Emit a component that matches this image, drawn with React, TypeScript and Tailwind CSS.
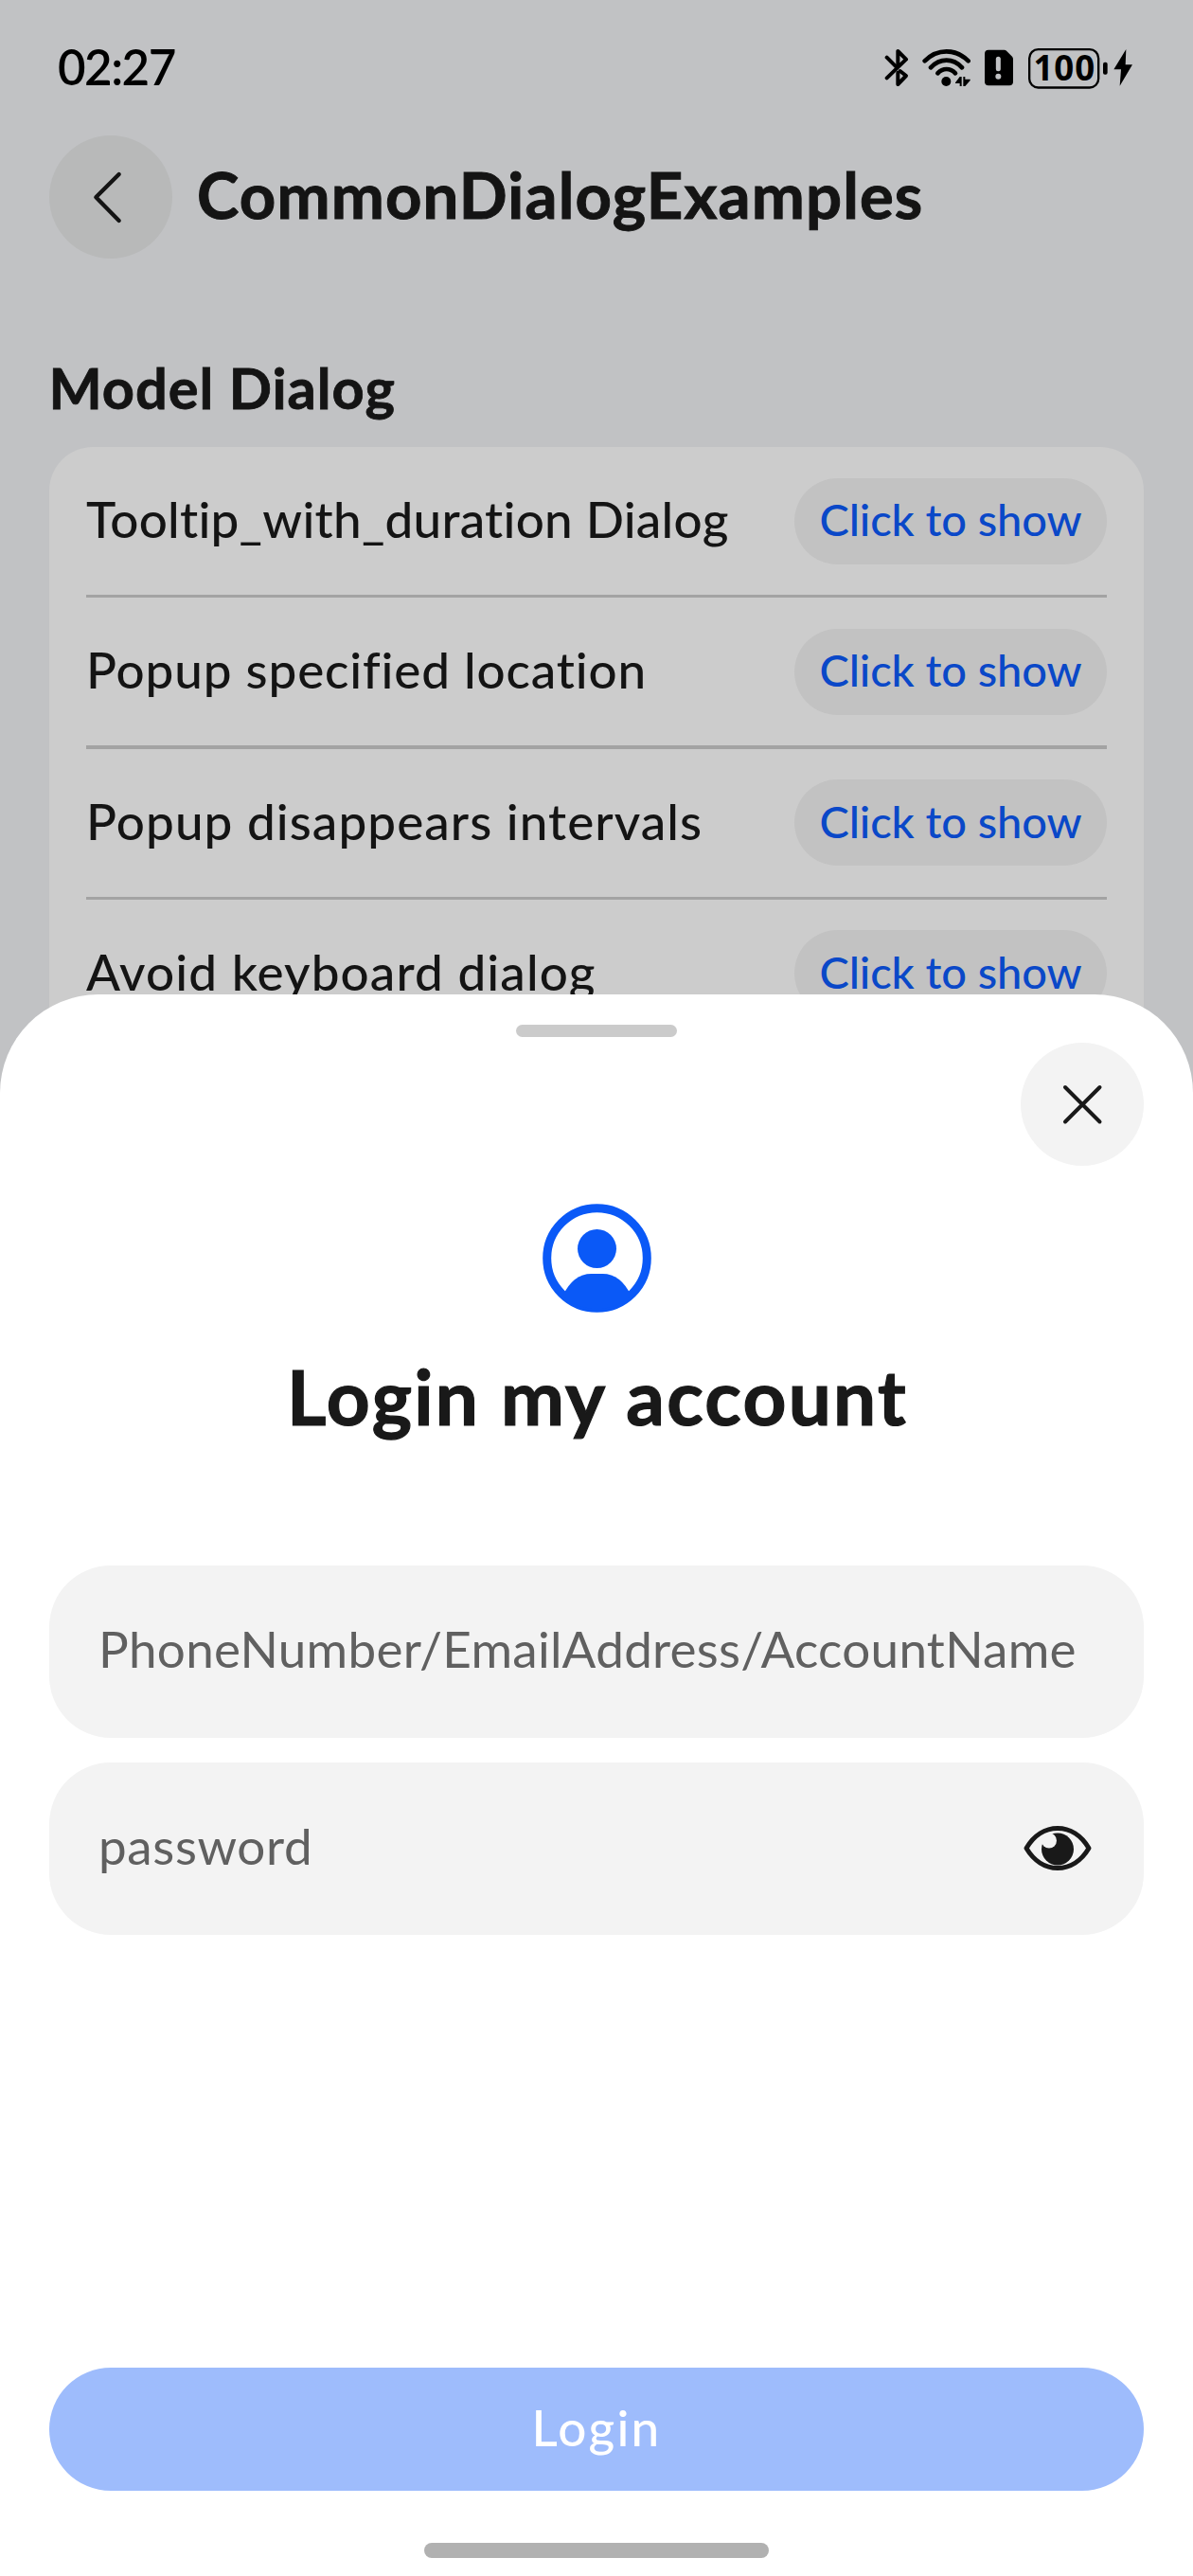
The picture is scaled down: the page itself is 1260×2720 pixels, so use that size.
function BluetoothIcon() {
  return (
    <svg className="h-[45px] w-[26px]" viewBox="102 60 78 135" fill="none" stroke="#000" strokeWidth="12" strokeLinecap="round" strokeLinejoin="round">
      <path d="M110 92 L142 124" />
      <path d="M110 157 L171 98 L145 72 V118" />
      <path d="M152 135 L171 150 L145 177 V140" />
    </svg>
  );
}

function WifiIcon() {
  return (
    <svg className="ml-[14px] h-[45px] w-[51px]" viewBox="222 60 153 135" fill="none" stroke="#000" strokeWidth="14" strokeLinecap="round">
      <path d="M230 103 Q260 73 299 73 T368 103" />
      <path d="M249 124 Q271 101 299 101 T348 124" />
      <path d="M271 142 Q283 129 299 129 T327 142" />
      <circle cx="298" cy="168" r="15" fill="#000" stroke="none" />
      <path d="M327 172 L341 153 H347 V183 H341 V174 H327 Z M352 153 H358 V161 H374 V165 L358 183 H352 Z" fill="#000" stroke="none" />
    </svg>
  );
}

function SimIcon() {
  return (
    <svg className="ml-[15px] h-[45px] w-[30px]" viewBox="420 60 90 135">
      <path d="M432 68 H482 Q486 68 489 71 L507 89 Q510 92 510 97 V169 Q510 181 498 181 H432 Q420 181 420 169 V80 Q420 68 432 68 Z" fill="#000" />
      <path d="M463 97 V128" stroke="#c1c2c4" strokeWidth="15" strokeLinecap="round" />
      <circle cx="463" cy="152" r="9" fill="#c1c2c4" />
    </svg>
  );
}

function BatteryIcon() {
  return (
    <svg className="ml-[16px] h-[45px] w-[110px]" viewBox="558 60 330 135">
      <rect x="561.5" y="66.5" width="219" height="121" rx="28" fill="none" stroke="#000" strokeWidth="7" />
      <rect x="795" y="107" width="14" height="39" rx="6" />
      <path d="M868 66 L829 130 H852 L848 182 L888 115 H866 Z" />
      <text x="673" y="165" textAnchor="middle" fontFamily="Noto Sans" fontWeight="700" fontSize="110" letterSpacing="3">100</text>
    </svg>
  );
}

const rows = [
  { label: "Tooltip_with_duration Dialog", tracking: "tracking-[0.25px]" },
  { label: "Popup specified location", tracking: "tracking-[0.85px]" },
  { label: "Popup disappears intervals", tracking: "tracking-[1.07px]" },
  { label: "Avoid keyboard dialog", tracking: "tracking-[1.12px]" },
];

function DialogRow({ label, tracking, first }: { label: string; tracking: string; first: boolean }) {
  return (
    <div>
      {!first && <div className="h-[3.25px] bg-[#a3a3a3]" />}
      <div className="flex h-[156px] items-center justify-between">
        <span className={`pb-[4px] text-[53px] leading-[64px] font-medium whitespace-nowrap text-[#141414] ${tracking}`}>{label}</span>
        <button className="flex h-[91px] w-[330px] items-center justify-center rounded-full bg-[#c2c2c2] pb-[4px] text-[47px] leading-[56px] font-medium tracking-[-0.1px] whitespace-nowrap text-[#0a48c8]">
          Click to show
        </button>
      </div>
    </div>
  );
}

export default function App() {
  return (
    <div className="relative h-[2720px] w-[1260px] overflow-hidden bg-[#c1c2c4] font-['Lato',sans-serif] [font-variant-ligatures:none]">
      <header className="flex h-[143px] items-center justify-between pr-[64px] pl-[61px]">
        <span className="pb-[2px] text-[51px] leading-[60px] font-semibold tracking-[-1.5px] text-black">02:27</span>
        <div className="flex items-center pt-[2px]">
          <BluetoothIcon />
          <WifiIcon />
          <SimIcon />
          <BatteryIcon />
        </div>
      </header>

      <div className="flex h-[130px] items-center pl-[52px]">
        <button className="flex size-[130px] items-center justify-center rounded-full bg-[#b8b9b9]">
          <svg className="size-[130px]" viewBox="66 338 390 390" fill="none" stroke="#141414" strokeWidth="13" strokeLinecap="round" strokeLinejoin="round">
            <path d="M287 461 L214 534 L287 608" />
          </svg>
        </button>
        <h1 className="ml-[26px] pb-[7px] text-[67px] leading-[80px] font-bold tracking-[1.15px] whitespace-nowrap text-[#141414] [-webkit-text-stroke:1px_#141414]">CommonDialogExamples</h1>
      </div>

      <h2 className="mt-[100px] pl-[51.5px] text-[59.6px] leading-[72px] font-bold tracking-[0.94px] text-[#141414] [-webkit-text-stroke:0.8px_#141414]">Model Dialog</h2>

      <div className="mx-[52px] mt-[27px] h-[700px] rounded-[46px] bg-[#cccccc] px-[39px]">
        {rows.map((row, i) => (
          <DialogRow key={row.label} label={row.label} tracking={row.tracking} first={i === 0} />
        ))}
      </div>

      <section className="absolute inset-x-0 bottom-0 flex h-[1670.5px] flex-col rounded-t-[104px] bg-white px-[52px]">
        <div className="mt-[32.5px] h-[13px] w-[170px] shrink-0 self-center rounded-full bg-[#cbcbcb]" />
        <button className="mt-[6px] size-[130px] shrink-0 self-end rounded-full bg-[#f3f3f3]">
          <svg className="size-full" viewBox="0 0 130 130" fill="none" stroke="#191919" strokeWidth="4" strokeLinecap="round">
            <path d="M47 47 L83.5 83.5 M83.5 47 L47 83.5" />
          </svg>
        </button>
        <svg className="mt-[39.5px] h-[115px] w-[115px] shrink-0 self-center" viewBox="572.5 1271 115 115">
          <circle cx="630" cy="1328.5" r="52.8" fill="none" stroke="#0a59f7" strokeWidth="9" />
          <circle cx="630" cy="1318.5" r="20.5" fill="#0a59f7" />
          <path d="M594 1368 Q605 1345 624 1345 H636 Q655 1345 666 1368 A53 53 0 0 1 594 1368 Z" fill="#0a59f7" />
        </svg>
        <h2 className="mt-[40px] pl-[2px] text-center text-[80px] leading-[96px] font-bold tracking-[2.28px] text-[#191919] [-webkit-text-stroke:1.2px_#191919]">Login my account</h2>

        <div className="mt-[131.5px] flex h-[181.5px] shrink-0 items-center rounded-[65px] bg-[#f3f3f3] px-[52px]">
          <span className="pb-[5px] text-[53px] leading-[64px] tracking-[0.28px] whitespace-nowrap text-[#606060]">PhoneNumber/EmailAddress/AccountName</span>
        </div>
        <div className="mt-[26.5px] flex h-[181.5px] shrink-0 items-center justify-between rounded-[65px] bg-[#f3f3f3] pr-[55px] pl-[52px]">
          <span className="pb-[5px] text-[53px] leading-[64px] tracking-[0.63px] text-[#606060]">password</span>
          <svg className="h-[47px] w-[72px]" viewBox="0 0 72 47">
            <path d="M3 23.5 C11 10 23 2.5 36 2.5 S61 10 69 23.5 C61 37 49 44.5 36 44.5 S11 37 3 23.5 Z" fill="none" stroke="#191919" strokeWidth="5" strokeLinejoin="round" />
            <circle cx="36" cy="24.5" r="17" fill="#191919" />
            <circle cx="27" cy="15.5" r="8" fill="#f3f3f3" />
          </svg>
        </div>
        <button className="mt-auto mb-[55px] flex h-[130px] shrink-0 items-center justify-center rounded-full bg-[#9ebcfc] pb-[4px] text-[53px] leading-[64px] font-medium tracking-[2.25px] text-white">Login</button>
        <div className="mb-[19.5px] h-[16px] w-[364px] shrink-0 self-center rounded-full bg-[#b1b1b1]" />
      </section>
    </div>
  );
}
